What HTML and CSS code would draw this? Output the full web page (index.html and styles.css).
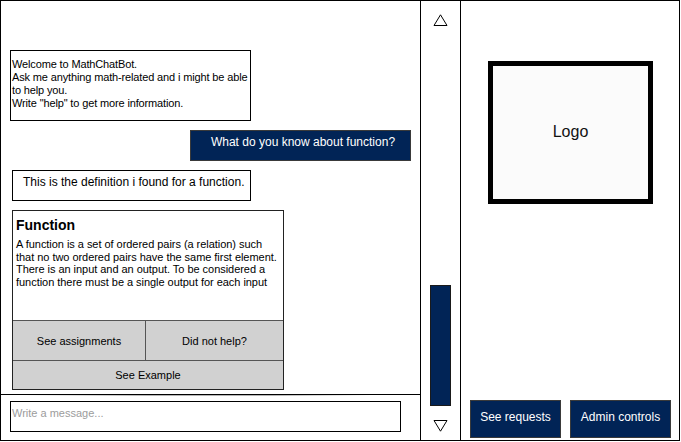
FILE: index.html
```html
<!DOCTYPE html>
<html lang="en">
<head>
<meta charset="utf-8">
<title>MathChatBot</title>
<link rel="stylesheet" href="styles.css">
</head>
<body>
<div class="app">
  <section class="chat">
    <div class="messages">
      <div class="bot-msg welcome">Welcome to MathChatBot.<br>Ask me anything math-related and i might be able<br>to help you.<br>Write "help" to get more information.</div>
      <div class="user-msg">What do you know about function?</div>
      <div class="bot-msg answer">This is the definition i found for a function.</div>
      <div class="card">
        <div class="card-body">
          <h2 class="card-title">Function</h2>
          <p class="card-text">A function is a set of ordered pairs (a relation) such<br>that no two ordered pairs have the same first element.<br>There is an input and an output. To be considered a<br>function there must be a single output for each input</p>
        </div>
        <div class="card-actions">
          <button class="card-btn split">See assignments</button>
          <button class="card-btn">Did not help?</button>
          <button class="card-btn wide">See Example</button>
        </div>
      </div>
    </div>
    <div class="composer">
      <input class="composer-input" type="text" placeholder="Write a message...">
    </div>
  </section>
  <div class="scrollbar">
    <svg class="arrow" width="15" height="12" viewBox="0 0 15 12"><polygon points="1,11.5 7.5,0.8 14,11.5" fill="#fff" stroke="#000" stroke-width="1"/></svg>
    <div class="thumb"></div>
    <svg class="arrow down" width="15" height="12" viewBox="0 0 15 12"><polygon points="1,0.5 7.5,11.2 14,0.5" fill="#fff" stroke="#000" stroke-width="1"/></svg>
  </div>
  <aside class="side">
    <div class="logo">Logo</div>
    <div class="side-actions">
      <button class="side-btn requests">See requests</button>
      <button class="side-btn admin">Admin controls</button>
    </div>
  </aside>
</div>
</body>
</html>
```

FILE: styles.css
```css
* { box-sizing: border-box; }

body {
  margin: 0;
  background: #fff;
  font-family: "Liberation Sans", Arial, sans-serif;
  color: #000;
}

.app {
  width: 680px;
  height: 441px;
  border: 1px solid #000;
  display: flex;
}

/* chat column */
.chat {
  width: 420px;
  border-right: 1px solid #000;
  display: flex;
  flex-direction: column;
}

.messages {
  flex: 1;
  display: flex;
  flex-direction: column;
  align-items: flex-start;
  padding: 49px 9px 0 9px;
}

.bot-msg {
  border: 1px solid #000;
  background: #fff;
}

.welcome {
  width: 241px;
  height: 71px;
  padding: 7px 1px 0 1px;
  font-size: 11px;
  line-height: 13px;
  letter-spacing: -0.14px;
  white-space: nowrap;
}

.user-msg {
  align-self: flex-end;
  margin-top: 9px;
  width: 221px;
  height: 31px;
  border: 1px solid #3a3a3a;
  background: #012456;
  color: #fff;
  font-size: 12px;
  line-height: 15px;
  padding: 4px 0 0 5px;
  text-align: center;
  white-space: nowrap;
}

.answer {
  margin: 9px 0 0 2px;
  width: 239px;
  height: 31px;
  font-size: 12px;
  line-height: 15px;
  padding: 4px 0 0 10px;
  white-space: nowrap;
}

.card {
  margin: 9px 0 0 2px;
  width: 272px;
  height: 180px;
  border: 1px solid #222;
  display: flex;
  flex-direction: column;
}

.card-body {
  height: 109px;
  padding: 6px 3px 0 3px;
}

.card-title {
  margin: 0;
  font-size: 14px;
  font-weight: bold;
  line-height: 16px;
}

.card-text {
  margin: 5px 0 0 0;
  font-size: 11px;
  line-height: 12.65px;
  letter-spacing: -0.04px;
  white-space: nowrap;
}

.card-actions {
  display: grid;
  grid-template-columns: 133px 137px;
  grid-template-rows: 40px 29px;
}

.card-btn {
  margin: 0;
  padding: 0;
  border: none;
  border-top: 1px solid #555;
  background: #d1d1d1;
  color: #000;
  font-family: inherit;
  font-size: 11px;
  display: flex;
  align-items: center;
  justify-content: center;
}

.card-btn.split { border-right: 1px solid #555; }
.card-btn.wide { grid-column: 1 / 3; }

.composer {
  height: 46px;
  border-top: 1px solid #000;
  padding: 6px 0 0 9px;
  background-image: linear-gradient(to right, rgba(120,120,120,0) 5%, rgba(120,120,120,0.55) 35%, rgba(120,120,120,0.55) 65%, rgba(120,120,120,0) 88%);
  background-size: 100% 1px;
  background-repeat: no-repeat;
}

.composer-input {
  display: block;
  width: 391px;
  height: 31px;
  margin: 0;
  border: 1px solid #000;
  border-radius: 0;
  padding: 5px 1px 12px 1px;
  font-family: inherit;
  font-size: 11px;
  line-height: 12px;
  outline: none;
  background: #fff;
}

.composer-input::placeholder { color: #9c9c9c; }

/* scrollbar column */
.scrollbar {
  width: 40px;
  border-right: 1px solid #000;
  display: flex;
  flex-direction: column;
  align-items: center;
  padding: 13px 0 8px 0;
}

.arrow { display: block; }
.arrow.down { margin-top: 14px; }

.thumb {
  margin-top: auto;
  width: 21px;
  height: 121px;
  border: 1px solid #1a1a1a;
  background: #012456;
}

/* right panel */
.side {
  flex: 1;
  display: flex;
  flex-direction: column;
  padding-bottom: 2px;
}

.logo {
  margin: 60px 0 0 27px;
  width: 165px;
  height: 143px;
  border: 5px solid #000;
  background: #fbfbfb;
  display: flex;
  align-items: center;
  justify-content: center;
  font-size: 16px;
  color: #111;
  padding-bottom: 2px;
}

.side-actions {
  margin-top: auto;
  display: flex;
  gap: 9px;
  padding-left: 9px;
}

.side-btn {
  height: 38px;
  margin: 0;
  padding: 0 0 4px 0;
  border: 1px solid #3a3a3a;
  background: #012456;
  color: #fff;
  font-family: inherit;
  font-size: 12px;
  display: flex;
  align-items: center;
  justify-content: center;
}

.side-btn.requests { width: 91px; }
.side-btn.admin { width: 101px; }
```
